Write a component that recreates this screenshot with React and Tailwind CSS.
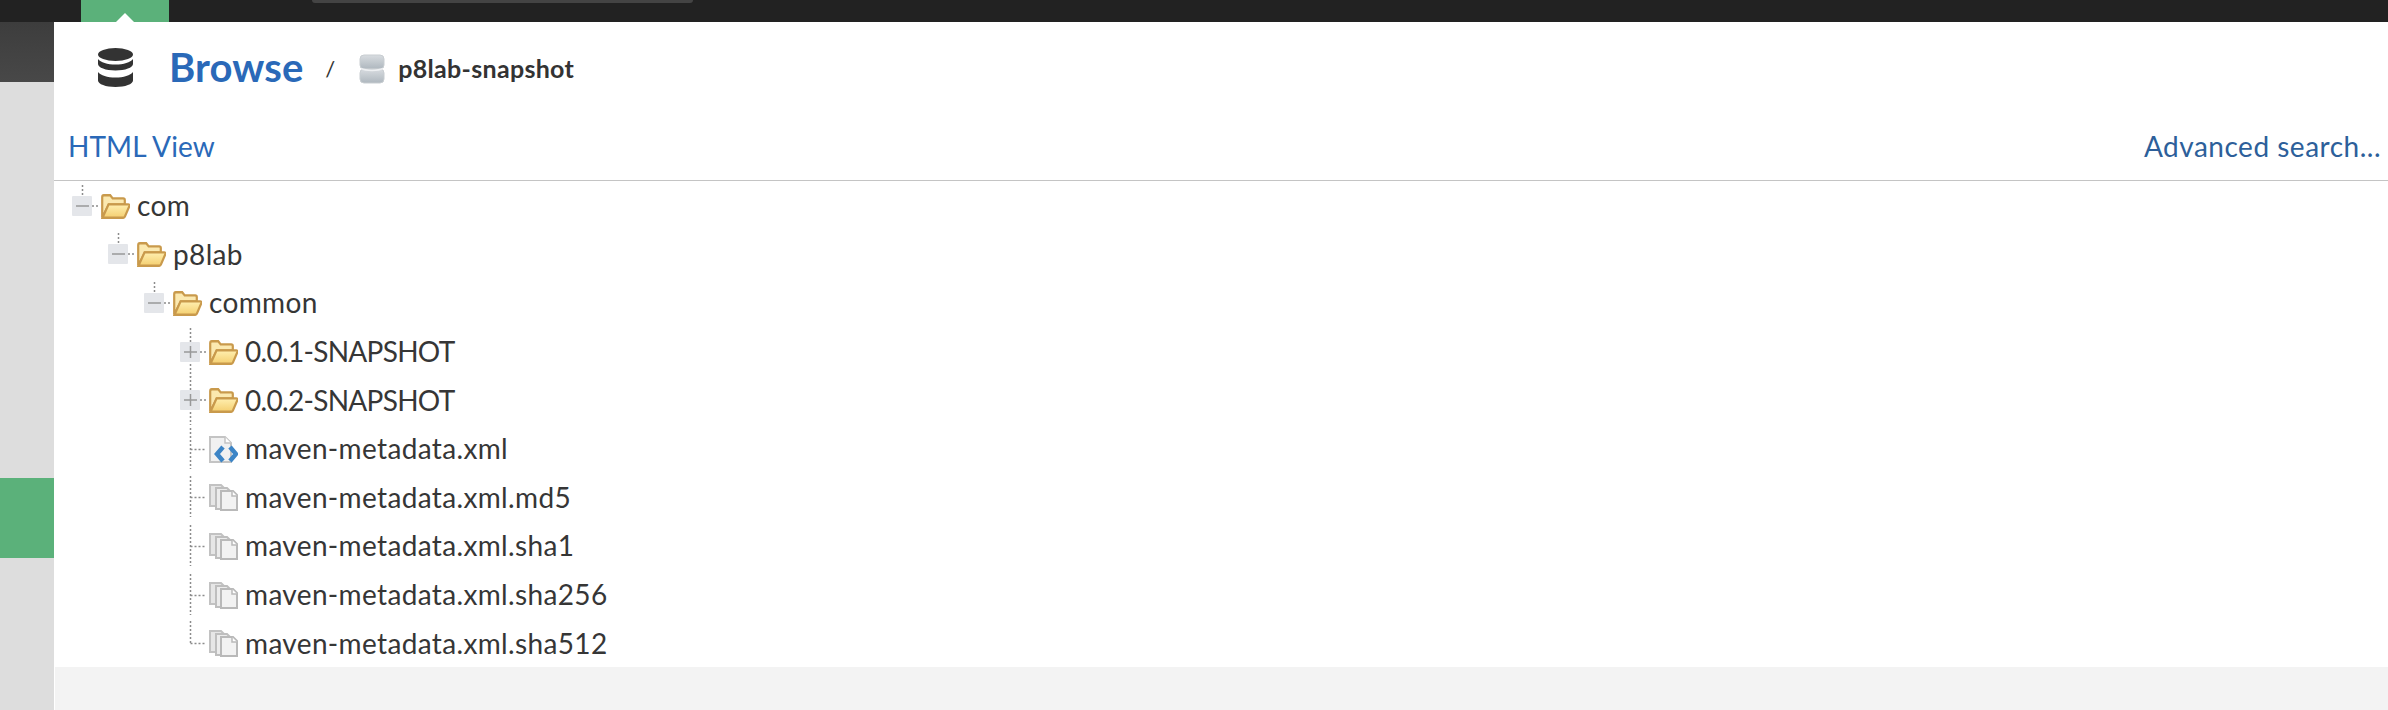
import React from "react";

const rows = [
  { name: "com", type: "folder", toggle: "minus", pad: "pl-[18px]" },
  { name: "p8lab", type: "folder", toggle: "minus", pad: "pl-[54px]" },
  { name: "common", type: "folder", toggle: "minus", pad: "pl-[90px]" },
  { name: "0.0.1-SNAPSHOT", type: "folder", toggle: "plus", pad: "pl-[126px]", tight: true },
  { name: "0.0.2-SNAPSHOT", type: "folder", toggle: "plus", pad: "pl-[126px]", tight: true },
  { name: "maven-metadata.xml", type: "xml", pad: "pl-[126px]" },
  { name: "maven-metadata.xml.md5", type: "copy", pad: "pl-[126px]" },
  { name: "maven-metadata.xml.sha1", type: "copy", pad: "pl-[126px]" },
  { name: "maven-metadata.xml.sha256", type: "copy", pad: "pl-[126px]" },
  { name: "maven-metadata.xml.sha512", type: "copy", last: true, pad: "pl-[126px]" },
];

function DbIcon() {
  return (
    <svg width="35" height="39" viewBox="0 0 35 39" className="block">
      <ellipse cx="17.5" cy="6.5" rx="17.5" ry="6.5" fill="#333" />
      <path d="M0 11v5c0 3.600 7.800 6.500 17.500 6.500S35 19.600 35 16v-5c-2.500 3.500-9.500 5.500-17.500 5.500S2.500 14.500 0 11z" fill="#333" />
      <path d="M0 24v8.500C0 36.100 7.800 39 17.500 39S35 36.100 35 32.500V24c-2.500 3.500-9.500 5.500-17.500 5.500S2.500 27.500 0 24z" fill="#333" />
    </svg>
  );
}

function RepoIcon() {
  return (
    <svg width="26" height="30" viewBox="0 0 26 30" className="block">
      <defs>
        <linearGradient id="repoFill" x1="0" y1="0" x2="0" y2="1">
          <stop offset="0" stopColor="#d8dce0" />
          <stop offset="1" stopColor="#aeb7be" />
        </linearGradient>
      </defs>
      <rect x="1" y="1" width="24" height="14" rx="4" fill="url(#repoFill)" stroke="#c8cdd1" />
      <rect x="1" y="15" width="24" height="14" rx="4" fill="url(#repoFill)" stroke="#c8cdd1" />
      <path d="M2 14.500c5 2.500 17 2.500 22 0" fill="none" stroke="#eef0f2" strokeWidth="1.500" />
    </svg>
  );
}

function FolderIcon() {
  return (
    <svg width="29" height="25" viewBox="0 0 29 24" preserveAspectRatio="none" className="block shrink-0">
      <defs>
        <linearGradient id="folderFront" x1="0" y1="0" x2="0" y2="1">
          <stop offset="0" stopColor="#ffefb0" />
          <stop offset="1" stopColor="#f4cf70" />
        </linearGradient>
      </defs>
      <path d="M1.200 22.500V3c0-1 .6-1.800 1.600-1.800h6.400l2.500 3h10.500c1 0 1.600.7 1.600 1.600V10H8z" fill="#fbe9b0" stroke="#c99a4c" strokeWidth="2.200" />
      <path d="M1.500 22.800L7.500 10h19.800c.9 0 1.400.7 1.100 1.500L24 21.500c-.3.800-.9 1.300-1.700 1.300z" fill="url(#folderFront)" stroke="#c99a4c" strokeWidth="2.200" />
    </svg>
  );
}

function XmlIcon() {
  return (
    <svg width="29" height="27" viewBox="0 0 29 27" className="block shrink-0">
      <path d="M1 1h15l6 6v19H1z" fill="#f1f1f1" stroke="#c4c4c4" strokeWidth="2" />
      <path d="M16 1v6h6" fill="#fff" stroke="#c4c4c4" strokeWidth="1.500" />
      <path d="M14 11l-6 7 6 7" fill="none" stroke="#3d85c6" strokeWidth="4.500" />
      <path d="M21 11l6 7-6 7" fill="none" stroke="#3d85c6" strokeWidth="4.500" />
    </svg>
  );
}

function CopyIcon() {
  return (
    <svg width="29" height="27" viewBox="0 0 29 27" className="block shrink-0">
      <path d="M1 1h11l3 3v18H1z" fill="#e6e6e6" stroke="#c2c2c2" strokeWidth="2" />
      <path d="M7 4h11l3 3v18H7z" fill="#ececec" stroke="#bebebe" strokeWidth="2" />
      <path d="M12 7h12l4 4v15H12z" fill="#f2f2f2" stroke="#b9b9b9" strokeWidth="2" />
      <path d="M23 7v5h5" fill="#fff" stroke="#b9b9b9" strokeWidth="1.500" />
    </svg>
  );
}

function Toggle({ kind }) {
  return (
    <svg width="28" height="49" viewBox="0 0 28 49" className="block shrink-0">
      {kind === "minus" && <path d="M10.500 3v11" stroke="#8c8c8c" strokeWidth="1.500" strokeDasharray="2 2" />}
      {kind === "plus" && <path d="M10.500 0v49" stroke="#8c8c8c" strokeWidth="1.500" strokeDasharray="2 2" />}
      <rect x="0" y="14" width="20" height="20" rx="1" fill="#e4e6ea" />
      <path d="M20 24h8" stroke="#8c8c8c" strokeWidth="1.500" strokeDasharray="2 2" />
      <path d="M4 24h13" stroke="#999" strokeWidth="1.500" />
      {kind === "plus" && <path d="M10.500 18v12" stroke="#999" strokeWidth="1.500" />}
    </svg>
  );
}

function Branch({ last }) {
  return (
    <svg width="28" height="49" viewBox="0 0 28 49" className="block shrink-0">
      <path d={last ? "M10.500 2v23" : "M10.500 3v41"} stroke="#8c8c8c" strokeWidth="1.500" strokeDasharray="2 2" />
      <path d="M10.500 24.500H26" stroke="#8c8c8c" strokeWidth="1.500" strokeDasharray="2 2" />
    </svg>
  );
}

function TreeRow({ row }) {
  return (
    <div className={`flex h-[48.6px] items-center ${row.pad}`}>
      {row.toggle ? <Toggle kind={row.toggle} /> : <Branch last={row.last} />}
      <span className="ml-[1px] mr-[7px] flex">
        {row.type === "folder" && <FolderIcon />}
        {row.type === "xml" && <XmlIcon />}
        {row.type === "copy" && <CopyIcon />}
      </span>
      <span className={`pb-[2px] text-[28px] leading-none text-[#363636] ${row.tight ? "tracking-[-0.7px]" : "tracking-[0.35px]"}`}>
        {row.name}
      </span>
    </div>
  );
}

export default function App() {
  return (
    <div className="flex h-[710px] w-full flex-col overflow-hidden bg-white font-['Lato','Liberation_Sans',sans-serif]">
      {/* top bar */}
      <div className="flex h-[22px] shrink-0 bg-[#222]">
        <div className="ml-[81px] flex h-full w-[88px] items-end justify-center bg-[#5bb17a]">
          <svg width="18" height="9" viewBox="0 0 18 9" className="block">
            <path d="M0 9L9 0l9 9z" fill="#fff" />
          </svg>
        </div>
        <div className="ml-[143px] h-[3px] w-[381px] rounded-b-[6px] bg-[#444]" />
      </div>

      <div className="flex min-h-0 flex-1">
        {/* sidebar */}
        <div className="flex w-[54px] shrink-0 flex-col bg-[#ddd]">
          <div className="h-[60px] bg-gradient-to-b from-[#3d3d3d] to-[#484848]" />
          <div className="mt-[396px] h-[80px] bg-[#5bb17a]" />
        </div>

        {/* main */}
        <div className="flex min-w-0 flex-1 flex-col">
          <div className="flex h-[90px] shrink-0 items-center pl-[44px]">
            <DbIcon />
            <a className="ml-[36px] text-[40px] font-bold leading-none tracking-[0.1px] text-[#2a69b8]">Browse</a>
            <span className="ml-[22px] mt-[3px] text-[22px] text-[#333]">/</span>
            <span className="ml-[24px] mt-[3px]"><RepoIcon /></span>
            <span className="ml-[13px] mt-[3px] text-[25px] font-bold tracking-[0.3px] text-[#333]">p8lab-snapshot</span>
          </div>
          <div className="flex h-[69px] shrink-0 items-center justify-between border-b border-[#c4c4c4] pl-[14px] pr-[7px] text-[28px]">
            <a className="tracking-[0.1px] text-[#2a69b8]">HTML View</a>
            <a className="tracking-[0.5px] text-[#2d5f9a]">Advanced search...</a>
          </div>
          <div className="min-h-0 flex-1 overflow-hidden pt-[1px]">
            {rows.map((row) => (
              <TreeRow key={row.name} row={row} />
            ))}
          </div>
          <div className="ml-[1px] h-[43px] shrink-0 bg-[#f3f3f3]" />
        </div>
      </div>
    </div>
  );
}
